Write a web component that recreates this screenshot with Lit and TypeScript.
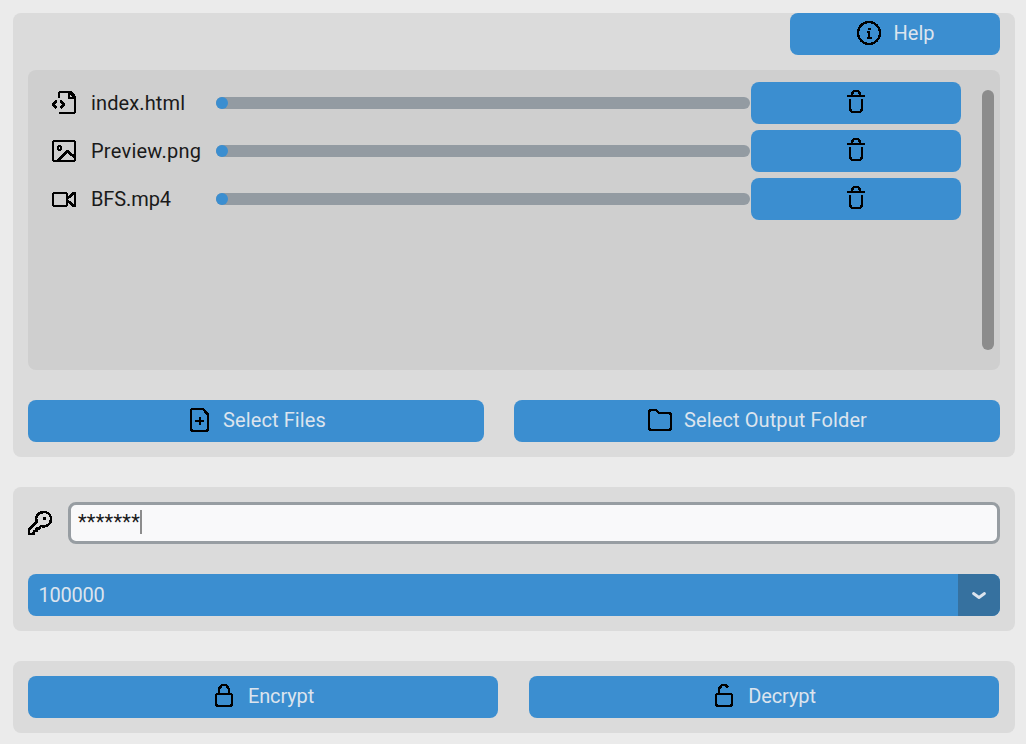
import { LitElement, html, svg, css } from "lit";
import { customElement, property } from "lit/decorators.js";
import { styleMap } from "lit/directives/style-map.js";

// Icon artwork on a 26 x 26 grid, drawn with hard pixel edges.
const icons: Record<string, unknown> = {
  info: svg`<circle cx="13" cy="12" r="11" stroke-width="2.300"/><path d="M11 10.500H13V17M11 17h5M11.500 7.500h3" stroke-width="2"/>`,
  trash: svg`<path d="M4 6h18M9 5.500V3.500L11 1h4l2 2.500V5.500M7 9v10.500L9 22h8l2-2.500V9"/><path d="M7.500 20.500L9 22h8l1.500-1.500"/>`,
  code: svg`<path d="M8 8V3L9 2h11l4 4.500v15.500L23 23H8M18 2v6h6M18 2.500l5.500 5" stroke-width="2"/><path d="M5.500 10.500l-3.500 4 3.500 4M9.500 10.500l3.500 4-3.500 4" stroke-width="2.700"/>`,
  image: svg`<rect x="2" y="3" width="22" height="20" rx="2"/><ellipse cx="8.500" cy="10" rx="1.500" ry="2" stroke-width="2"/><path d="M7 22.500l9-9.500 8 6.500" stroke-width="2.800"/>`,
  video: svg`<rect x="2" y="7" width="14" height="13" rx="2"/><path d="M17 12l5-4.500L24 7v13l-2-.5L17 15" stroke-width="2.700"/>`,
  file: svg`<g transform="translate(1 0)"><path d="M5 1h11l5 5.500v15L20 23H5.500L4 21.500V2z"/><path d="M12.500 8.500v8.500M8 13h9" stroke-width="2"/></g>`,
  folder: svg`<path d="M2 4l1.500-2H9l3 3h11l1 1.500V20.500L22.500 22h-19L2 20.500z"/>`,
  key: svg`<path d="M9.500 12C8 6.500 11.500 2 16.800 2 21 2 24 5 24 9.200c0 5-5 8.500-10 6.800L12 18.500H9.500V21H7L6.500 24H2v-4.500z" stroke-width="2.500"/><path d="M16 8.500h3" stroke-width="3"/>`,
  lock: svg`<path transform="translate(-1 0)" d="M5 11l1-1h14l1 1v10l-1.500 1h-13L5 21zM8 10V5l3-4h4l3 4v5"/>`,
  unlock: svg`<path transform="translate(-1 0)" d="M5 11l1-1h14l1 1v10l-1.500 1h-13L5 21zM8 10V5l3-4h3.500l3 2.500"/>`,
};

@customElement("app-icon")
class AppIcon extends LitElement {
  @property() name = "";
  static styles = css`
    :host { display: block; width: 26px; height: 26px; flex: none; }
    svg { display: block; fill: none; stroke: #000; stroke-width: 2.6; stroke-linejoin: round; shape-rendering: crispEdges; }
  `;
  render() {
    return html`<svg width="26" height="26" viewBox="0 0 26 26">${icons[this.name]}</svg>`;
  }
}

@customElement("app-button")
class AppButton extends LitElement {
  @property() icon = "";
  @property() label = "";
  @property({ type: Number }) tracking = 0;
  @property({ type: Number }) gap = 11;
  static styles = css`
    :host { display: block; height: 42px; }
    button {
      width: 100%; height: 42px; border: 0; padding: 0; border-radius: 8px;
      background: #3b8ed0; color: #dce4ee; font: 20px/24px Roboto, sans-serif;
      display: flex; align-items: center; justify-content: center;
    }
    span { padding-bottom: 2px; white-space: nowrap; }
  `;
  render() {
    return html`<button style=${styleMap({ gap: `${this.gap}px`, letterSpacing: `${this.tracking}px` })}><app-icon name=${this.icon}></app-icon>${this.label ? html`<span>${this.label}</span>` : ""}</button>`;
  }
}

@customElement("app-root")
class AppRoot extends LitElement {
  static styles = css`
    :host {
      display: block; box-sizing: border-box; width: 1026px; height: 744px;
      padding: 13px 11px 11px 13px; background: #ebebeb; color: #1a1a1a;
      font: 20px/24px Roboto, sans-serif;
    }
    * { box-sizing: border-box; }
    .page { display: flex; flex-direction: column; gap: 30px; }
    .panel { background: #dbdbdb; border-radius: 8px; }
    .files { height: 444px; padding: 0 15px; }
    .top { display: flex; justify-content: flex-end; }
    .help { width: 210px; }
    .list {
      height: 300px; margin: 15px 0 30px; padding: 12px 6px 0 23px;
      border-radius: 8px; background: #cfcfcf; display: flex; justify-content: space-between;
    }
    .rows { display: flex; flex-direction: column; gap: 6px; }
    .row { display: grid; grid-template-columns: 40px 125px 534px 210px; align-items: center; height: 42px; }
    .track { height: 12px; border-radius: 6px; background: #939ba2; }
    .fill { width: 12px; height: 12px; border-radius: 6px; background: #3b8ed0; }
    .remove { margin-left: 1px; width: 210px; }
    .scroll { width: 12px; height: 260px; margin-top: 8px; border-radius: 6px; background: #8c8c8c; }
    .pair { display: grid; grid-template-columns: 456px 486px; gap: 30px; }
    .settings { height: 144px; padding: 15px; }
    .secret { display: flex; align-items: center; margin-bottom: 30px; gap: 15px; height: 42px; }
    .secret app-icon { margin-left: -1px; }
    .entry {
      flex: 1; height: 42px; border: 3px solid #979da2; border-radius: 8px;
      background: #f9f9fa; padding: 5px 7px; display: flex; letter-spacing: 0.26px;
    }
    .caret { width: 2px; height: 24px; background: #8c8c8c; }
    .combo { height: 42px; border-radius: 8px; overflow: hidden; display: flex; background: #3b8ed0; color: #dce4ee; }
    .value { flex: 1; padding: 9px 10.5px; letter-spacing: -0.25px; }
    .arrow { width: 42px; background: #36719f; display: flex; align-items: center; justify-content: center; }
    .arrow svg { margin-top: 2px; fill: none; stroke: #dce4ee; stroke-width: 2.8; stroke-linecap: round; stroke-linejoin: round; }
    .actions { height: 72px; padding: 15px; }
    .actions .pair { grid-template-columns: 470px 470px; gap: 31px; }
  `;

  private files = [
    { icon: "code", name: "index.html", tracking: 0.12 },
    { icon: "image", name: "Preview.png", tracking: 0.25 },
    { icon: "video", name: "BFS.mp4", tracking: -0.1 },
  ];

  render() {
    return html`
      <div class="page">
        <section class="panel files">
          <div class="top"><app-button class="help" icon="info" label="Help" gap="12"></app-button></div>
          <div class="list">
            <div class="rows">
              ${this.files.map((f) => html`
                <div class="row">
                  <app-icon name=${f.icon}></app-icon>
                  <span style=${styleMap({ letterSpacing: `${f.tracking}px` })}>${f.name}</span>
                  <div class="track"><div class="fill"></div></div>
                  <app-button class="remove" icon="trash"></app-button>
                </div>`)}
            </div>
            <div class="scroll"></div>
          </div>
          <div class="pair">
            <app-button icon="file" label="Select Files" tracking="0.11"></app-button>
            <app-button icon="folder" label="Select Output Folder" tracking="0.11"></app-button>
          </div>
        </section>
        <section class="panel settings">
          <div class="secret">
            <app-icon name="key"></app-icon>
            <div class="entry"><span>*******</span><span class="caret"></span></div>
          </div>
          <div class="combo">
            <span class="value">100000</span>
            <span class="arrow"><svg width="16" height="10" viewBox="0 0 16 10"><path d="M2.500 2.500L8 6.500l5.500-4"/></svg></span>
          </div>
        </section>
        <section class="panel actions">
          <div class="pair">
            <app-button icon="lock" label="Encrypt" tracking="-0.14" gap="10"></app-button>
            <app-button icon="unlock" label="Decrypt" tracking="-0.1" gap="10"></app-button>
          </div>
        </section>
      </div>`;
  }
}
